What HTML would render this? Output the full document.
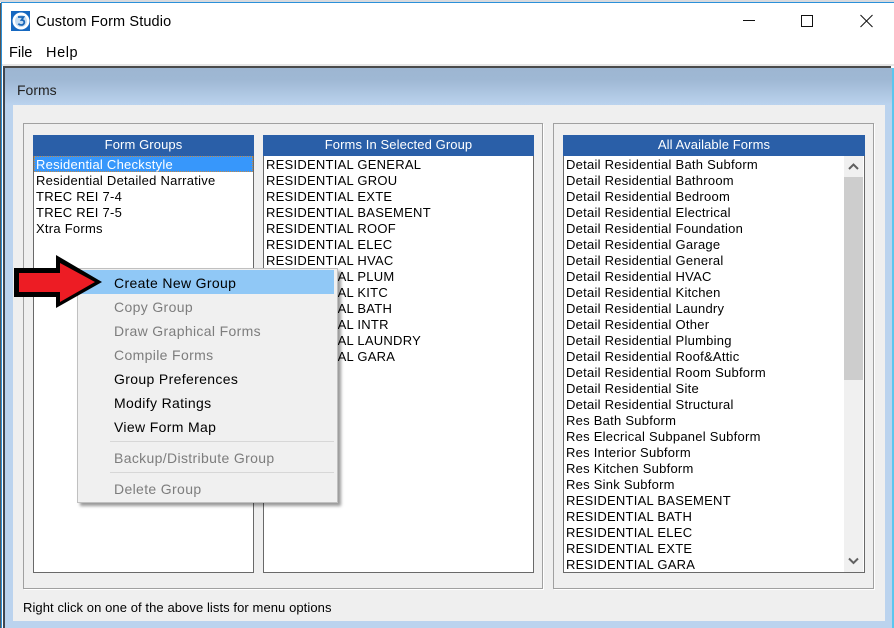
<!DOCTYPE html>
<html><head><meta charset="utf-8"><style>
html,body{margin:0;padding:0;width:894px;height:628px;overflow:hidden;background:#fff}
*{box-sizing:border-box}
div{position:absolute}
.t{font-family:"Liberation Sans",sans-serif;white-space:nowrap;color:#000}
.r{font-size:13px;line-height:16px;left:3px;white-space:nowrap;position:absolute;font-family:"Liberation Sans",sans-serif;color:#000;letter-spacing:.25px}
.list{background:#fff;border:2px solid #fff;outline:1px solid #696969;outline-offset:-1px}
.hd{left:-2px;right:-2px;top:-2px;height:21px;background:#2a5fa8;color:#fff;text-align:center;font:13px/19px "Liberation Sans",sans-serif;letter-spacing:.1px;padding-top:0}
.m{left:114px;font:14px/24px "Liberation Sans",sans-serif;white-space:nowrap;color:#000;letter-spacing:.35px}
.g{color:#7d7d7d}
.box{border:1px solid #a0a0a0;box-shadow:1px 1px 0 #fff}
</style></head><body>
<div style="left:0;top:0;width:894px;height:2px;background:#d8dade"></div>
<div style="left:1px;top:2px;width:893px;height:1px;background:#2b90d9"></div>
<div style="left:0;top:3px;width:1px;height:625px;background:#555"></div>
<div style="left:1px;top:3px;width:1px;height:625px;background:#2b90d9"></div>
<svg style="position:absolute;left:11px;top:11px" width="19" height="20" viewBox="0 0 19 20"><rect width="19" height="20" fill="#1668c0"/><circle cx="10" cy="10" r="8.500" fill="#fff"/><circle cx="10" cy="10" r="6" fill="#c5dcf1"/><path d="M7 6h5.500l-2 3c2 0 2.800 1 2.800 2.200 0 1.500-1.300 2.800-3 2.800-1.200 0-2.200-.4-3-1.200" fill="none" stroke="#1a67b8" stroke-width="1.800"/></svg>
<div class="t" style="left:36px;top:13px;font-size:14.500px;line-height:18px;letter-spacing:.13px">Custom Form Studio</div>
<div class="t" style="left:9px;top:44px;font-size:14.500px;line-height:18px;letter-spacing:0">File</div>
<div class="t" style="left:46px;top:44px;font-size:14.500px;line-height:18px;letter-spacing:.6px">Help</div>
<svg style="position:absolute;left:740px;top:12px" width="140" height="18" fill="none" stroke="#111" stroke-width="1"><path d="M3 8.500H15"/><rect x="61.500" y="3.500" width="11" height="11"/><path d="M120.500 3l12 12M132.500 3l-12 12"/></svg>
<div style="left:2px;top:64px;width:892px;height:2px;background:#e6e6e6"></div>
<div style="left:3px;top:66px;width:888px;height:2px;background:#4a4a4a"></div>
<div style="left:3px;top:66px;width:2px;height:562px;background:#3f4650"></div>
<div style="left:5px;top:68px;width:888px;height:560px;background:linear-gradient(#9db6d2 0,#9fb8d4 12px,#bbd3ee 37px,#bbd3ee 100%)"></div>
<div style="left:892px;top:68px;width:2px;height:560px;background:#5cc6ee"></div>
<div style="left:13px;top:105px;width:872px;height:516px;background:#efefef"></div>
<div class="t" style="left:17px;top:82px;font-size:14px;line-height:17px;color:#222">Forms</div>
<div class="box" style="left:23px;top:123px;width:520px;height:466px"></div>
<div class="box" style="left:553px;top:123px;width:321px;height:466px"></div>

<div class="list" style="left:33px;top:135px;width:221px;height:438px">
<div class="hd">Form Groups</div>
<div style="left:-1px;top:19px;width:219px;height:16px;background:#3797fb;outline:1px dotted #c08a4a;outline-offset:-1px"></div>
<div class="r" style="top:20px;left:1px;color:#fff">Residential Checkstyle</div>
<div class="r" style="top:36px;left:1px">Residential Detailed Narrative</div>
<div class="r" style="top:52px;left:1px">TREC REI 7-4</div>
<div class="r" style="top:68px;left:1px">TREC REI 7-5</div>
<div class="r" style="top:84px;left:1px">Xtra Forms</div>
</div>

<div class="list" style="left:263px;top:135px;width:271px;height:438px">
<div class="hd">Forms In Selected Group</div>
<div class="r" style="top:20px;left:1px">RESIDENTIAL GENERAL</div>
<div class="r" style="top:36px;left:1px">RESIDENTIAL GROU</div>
<div class="r" style="top:52px;left:1px">RESIDENTIAL EXTE</div>
<div class="r" style="top:68px;left:1px">RESIDENTIAL BASEMENT</div>
<div class="r" style="top:84px;left:1px">RESIDENTIAL ROOF</div>
<div class="r" style="top:100px;left:1px">RESIDENTIAL ELEC</div>
<div class="r" style="top:116px;left:1px">RESIDENTIAL HVAC</div>
<div class="r" style="top:132px;left:1px">RESIDENTIAL PLUM</div>
<div class="r" style="top:148px;left:1px">RESIDENTIAL KITC</div>
<div class="r" style="top:164px;left:1px">RESIDENTIAL BATH</div>
<div class="r" style="top:180px;left:1px">RESIDENTIAL INTR</div>
<div class="r" style="top:196px;left:1px">RESIDENTIAL LAUNDRY</div>
<div class="r" style="top:212px;left:1px">RESIDENTIAL GARA</div>
</div>

<div class="list" style="left:563px;top:135px;width:302px;height:438px">
<div class="hd">All Available Forms</div>
<div class="r" style="top:20px;left:1px">Detail Residential Bath Subform</div>
<div class="r" style="top:36px;left:1px">Detail Residential Bathroom</div>
<div class="r" style="top:52px;left:1px">Detail Residential Bedroom</div>
<div class="r" style="top:68px;left:1px">Detail Residential Electrical</div>
<div class="r" style="top:84px;left:1px">Detail Residential Foundation</div>
<div class="r" style="top:100px;left:1px">Detail Residential Garage</div>
<div class="r" style="top:116px;left:1px">Detail Residential General</div>
<div class="r" style="top:132px;left:1px">Detail Residential HVAC</div>
<div class="r" style="top:148px;left:1px">Detail Residential Kitchen</div>
<div class="r" style="top:164px;left:1px">Detail Residential Laundry</div>
<div class="r" style="top:180px;left:1px">Detail Residential Other</div>
<div class="r" style="top:196px;left:1px">Detail Residential Plumbing</div>
<div class="r" style="top:212px;left:1px">Detail Residential Roof&amp;Attic</div>
<div class="r" style="top:228px;left:1px">Detail Residential Room Subform</div>
<div class="r" style="top:244px;left:1px">Detail Residential Site</div>
<div class="r" style="top:260px;left:1px">Detail Residential Structural</div>
<div class="r" style="top:276px;left:1px">Res Bath Subform</div>
<div class="r" style="top:292px;left:1px">Res Elecrical Subpanel Subform</div>
<div class="r" style="top:308px;left:1px">Res Interior Subform</div>
<div class="r" style="top:324px;left:1px">Res Kitchen Subform</div>
<div class="r" style="top:340px;left:1px">Res Sink Subform</div>
<div class="r" style="top:356px;left:1px">RESIDENTIAL BASEMENT</div>
<div class="r" style="top:372px;left:1px">RESIDENTIAL BATH</div>
<div class="r" style="top:388px;left:1px">RESIDENTIAL ELEC</div>
<div class="r" style="top:404px;left:1px">RESIDENTIAL EXTE</div>
<div class="r" style="top:420px;left:1px">RESIDENTIAL GARA</div>
<div style="left:279px;top:19px;width:19px;height:416px;background:#f0f0f0"></div>
<div style="left:279px;top:40px;width:19px;height:203px;background:#cdcdcd"></div>
<svg style="position:absolute;left:279px;top:19px" width="19" height="416" fill="none" stroke="#606060" stroke-width="2"><path d="M5 13L9.500 8.500 14 13"/><path d="M5 402.500L9.500 407 14 402.500"/></svg>
</div>

<div class="t" style="left:23px;top:600px;font-size:13px;line-height:16px;letter-spacing:.08px">Right click on one of the above lists for menu options</div>

<div style="left:77px;top:268px;width:261px;height:235px;background:#f0f0f0;border:1px solid #c0c0c0;box-shadow:3px 3px 3px rgba(0,0,0,.4)"></div>
<div style="left:79px;top:270px;width:255px;height:24px;background:#90c8f6"></div>
<div class="m" style="top:271px">Create New Group</div>
<div class="m g" style="top:295px">Copy Group</div>
<div class="m g" style="top:319px">Draw Graphical Forms</div>
<div class="m g" style="top:343px">Compile Forms</div>
<div class="m" style="top:367px">Group Preferences</div>
<div class="m" style="top:391px">Modify Ratings</div>
<div class="m" style="top:415px">View Form Map</div>
<div style="left:110px;top:441px;width:224px;height:1px;background:#d7d7d7"></div>
<div class="m g" style="top:446px">Backup/Distribute Group</div>
<div style="left:110px;top:472px;width:224px;height:1px;background:#d7d7d7"></div>
<div class="m g" style="top:477px">Delete Group</div>

<svg style="position:absolute;left:0;top:240px" width="120" height="80"><path d="M14 28H56V15L102 42 56 68V57H14Z" fill="#000"/><path d="M19 33H60V23L95 42 60 62V52H19Z" fill="#ed1c24"/></svg>
</body></html>
